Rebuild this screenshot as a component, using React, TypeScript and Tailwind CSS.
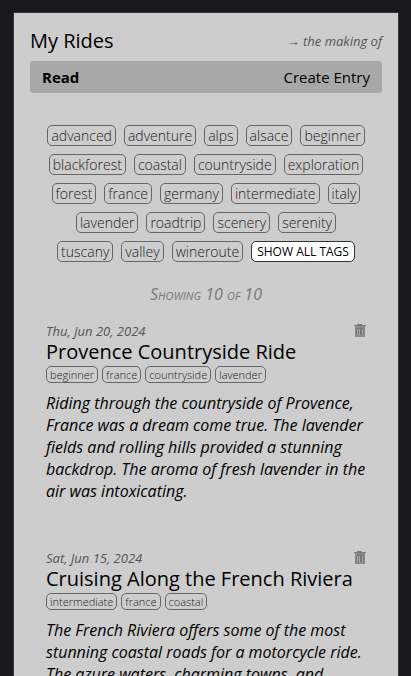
import React from "react";

type Entry = { date: string; title: string; tags: string[]; text: string };

const allTags = [
  "advanced", "adventure", "alps", "alsace", "beginner", "blackforest", "coastal",
  "countryside", "exploration", "forest", "france", "germany", "intermediate", "italy",
  "lavender", "roadtrip", "scenery", "serenity", "tuscany", "valley", "wineroute",
];

const entries: Entry[] = [
  {
    date: "Thu, Jun 20, 2024",
    title: "Provence Countryside Ride",
    tags: ["beginner", "france", "countryside", "lavender"],
    text: "Riding through the countryside of Provence, France was a dream come true. The lavender fields and rolling hills provided a stunning backdrop. The aroma of fresh lavender in the air was intoxicating.",
  },
  {
    date: "Sat, Jun 15, 2024",
    title: "Cruising Along the French Riviera",
    tags: ["intermediate", "france", "coastal"],
    text: "The French Riviera offers some of the most stunning coastal roads for a motorcycle ride. The azure waters, charming towns, and",
  },
];

function TrashIcon() {
  return (
    <svg viewBox="0 0 12 13" className="block h-[13px] w-3" shapeRendering="crispEdges" aria-hidden="true">
      <path d="M0 1h3V0h5v1h4v1H0z" fill="#7a7a7a" />
      <path d="M1 2h10v11H1z" fill="#8a8a8a" />
      <path d="M2 4h8v7H2z" fill="#777" />
      <path d="M3 5h1v6H3zM5 5h1v6H5zM8 5h1v6H8z" fill="#aaa" />
    </svg>
  );
}

function EntryCard({ entry }: { entry: Entry }) {
  return (
    <article>
      <div className="flex h-4 items-end justify-between">
        <time className="text-[13px] leading-4 text-[#555] italic">{entry.date}</time>
        <button type="button" aria-label="Delete entry" className="pb-0.5">
          <TrashIcon />
        </button>
      </div>
      <h2 className="text-[20px] leading-[26px] whitespace-nowrap">{entry.title}</h2>
      <ul className="mt-px flex gap-1">
        {entry.tags.map((tag) => (
          <li key={tag} className="h-[17px] rounded-[5px] border border-[#666] px-[3px] text-[11px] leading-[15px] font-light text-[#222]">
            {tag}
          </li>
        ))}
      </ul>
      <p className="mt-[9px] text-[16px] leading-[22px] italic">{entry.text}</p>
    </article>
  );
}

export default function App() {
  return (
    <div className="min-h-screen bg-[#19191b] pt-3 pr-3 pb-3 pl-[13px] font-['Open_Sans','Noto_Sans',sans-serif] text-black">
      <main className="border border-[#333538] bg-[#cdcdcd] px-4 pb-8">
        <header className="flex h-12 items-center justify-between pt-2">
          <h1 className="text-[20px] leading-7">My Rides</h1>
          <a href="#making-of" className="text-[13px] leading-4 text-[#555] italic">→ the making of</a>
        </header>
        <nav className="flex h-8 items-center justify-between rounded-[3px] bg-[#a8a8a8] px-3 text-[15px]">
          <a href="#read" className="font-bold">Read</a>
          <a href="#create">Create Entry</a>
        </nav>
        <section className="px-4 pt-8">
          <div className="flex flex-wrap justify-center gap-2">
            {allTags.map((tag) => (
              <button key={tag} type="button" className="h-[21px] rounded-[5px] border border-[#666] px-[3px] text-[14px] leading-[19px] font-light text-[#222]">
                {tag}
              </button>
            ))}
            <button type="button" className="h-[21px] rounded-[5px] border border-[#333] bg-white px-[5px] text-[12px] leading-[19px]">
              SHOW ALL TAGS
            </button>
          </div>
          <p className="mt-6 text-center text-[16px] leading-4 text-[#777] italic [font-variant:small-caps]">Showing 10 of 10</p>
          <div className="mt-[21px] flex flex-col gap-12">
            {entries.map((entry) => (
              <EntryCard key={entry.title} entry={entry} />
            ))}
          </div>
        </section>
      </main>
    </div>
  );
}
